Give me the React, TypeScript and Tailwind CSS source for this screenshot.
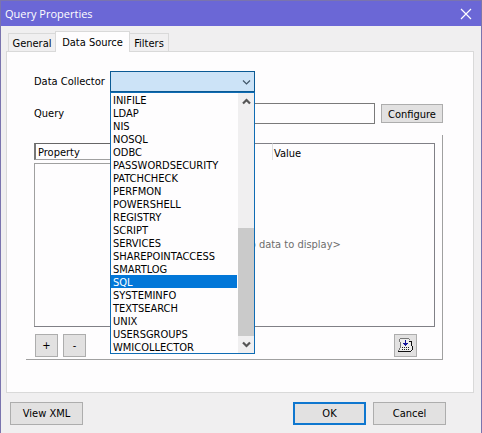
import React, { useState } from "react";

const collectors = [
  "INIFILE",
  "LDAP",
  "NIS",
  "NOSQL",
  "ODBC",
  "PASSWORDSECURITY",
  "PATCHCHECK",
  "PERFMON",
  "POWERSHELL",
  "REGISTRY",
  "SCRIPT",
  "SERVICES",
  "SHAREPOINTACCESS",
  "SMARTLOG",
  "SQL",
  "SYSTEMINFO",
  "TEXTSEARCH",
  "UNIX",
  "USERSGROUPS",
  "WMICOLLECTOR",
];

function Chevron({ up = false, thin = false }: { up?: boolean; thin?: boolean }) {
  return (
    <svg
      width="9"
      height="7"
      viewBox="0 0 9 7"
      fill="none"
      stroke={thin ? "#3f5568" : "#555555"}
      strokeWidth={thin ? 1.2 : 2.2}
      aria-hidden="true"
    >
      <path d={up ? "M1 5.5 4.5 2 8 5.5" : "M1 1.5 4.5 5 8 1.5"} />
    </svg>
  );
}

function SheetIcon() {
  return (
    <svg width="15" height="15" viewBox="0 0 15 15" fill="none" shapeRendering="crispEdges" aria-hidden="true">
      <path d="M2 1h9v2h3v4l1 2v3l-2 2H1l1-3V6L1 4z" fill="#ededed" />
      <path d="M2 0h9v1H2zM1 1h1v3H1zM2 4h1v6H2zM1 10h1v2H1zM0 12h1v1H0zM11 1h1v1h-1z" fill="#777777" />
      <path d="M11 3h3v5h-1V4h-2zM14 8h1v4h-1zM13 12h1v1h-1zM0 13h13v1H0z" fill="#111111" />
      <path d="M7 2h1v3h2v1H9v1H8v1H7V7H6V6H5V5h2z" fill="#15159a" />
      <path d="M4 9h1v1H4zM6 9h1v1H6zM8 9h1v1H8zM10 9h1v1h-1zM4 11h1v1H4zM6 11h1v1H6zM8 11h1v1H8zM10 11h1v1h-1z" fill="#222222" />
    </svg>
  );
}

const button = "border border-[#adadad] bg-[#e2e1e1] text-center";

export default function App() {
  const [selected, setSelected] = useState("SQL");

  return (
    <main className="border border-[#7a74ae] bg-[#f0eff0] font-['DejaVu_Sans_Condensed','DejaVu_Sans',sans-serif] text-[11px] leading-[13px] text-black">
      <header className="flex h-[25px] items-center justify-between bg-[#6b67d6] pr-[9px] pl-1 text-white">
        <h1 className="font-['Open_Sans',sans-serif] text-[11px] leading-4">Query Properties</h1>
        <button type="button" aria-label="Close">
          <svg width="12" height="12" viewBox="0 0 12 12" stroke="white" strokeWidth="1.200" aria-hidden="true">
            <path d="M1 1l10 10M11 1 1 11" />
          </svg>
        </button>
      </header>

      <div className="pt-[5px] pr-[7px] pl-[5px]">
        <div role="tablist" className="-mb-px flex items-end pl-[2px]">
          <button type="button" role="tab" aria-selected="false" className="h-[19px] w-[47px] border border-r-0 border-[#d9d9d9] pt-[2px]">
            General
          </button>
          <button type="button" role="tab" aria-selected="true" className="z-10 h-[21px] w-[75px] border border-b-0 border-[#d9d9d9] bg-[#fefdfe]">
            Data Source
          </button>
          <button type="button" role="tab" aria-selected="false" className="h-[19px] w-[39px] border border-l-0 border-[#d9d9d9] pt-[2px]">
            Filters
          </button>
        </div>

        <section className="border border-[#d9d9d9] bg-[#fefdfe] pt-[19px] pr-[30px] pb-8 pl-[19px]">
          <div className="pl-2">
            <div className="flex items-center">
              <label htmlFor="collector" className="w-[76px]">
                Data Collector
              </label>
              <div className="relative w-[145px]">
                <select
                  id="collector"
                  className="block h-[21px] w-full appearance-none border border-[#0a5a94] bg-[#cce3f7] text-transparent"
                  value={selected}
                  onChange={(event) => setSelected(event.target.value)}
                >
                  {collectors.map((name) => (
                    <option key={name}>{name}</option>
                  ))}
                </select>
                <span className="pointer-events-none absolute top-2 right-1">
                  <Chevron thin />
                </span>
                <div className="absolute top-[21px] left-0 z-20 flex w-full border border-[#0f6cb4] bg-[#fefdfe]">
                  <ul role="listbox" aria-label="Data Collector" className="flex-1">
                    {collectors.map((name) => (
                      <li
                        key={name}
                        role="option"
                        aria-selected={name === selected}
                        onClick={() => setSelected(name)}
                        className={
                          name === selected
                            ? "h-[13px] bg-[#0277d8] pt-px pl-[2px] text-white"
                            : "h-[13px] pt-px pl-[2px]"
                        }
                      >
                        {name}
                      </li>
                    ))}
                  </ul>
                  <div className="ml-px flex w-4 flex-col bg-[#f0eff0]">
                    <span className="flex h-[17px] items-center justify-center">
                      <Chevron up />
                    </span>
                    <span className="mt-auto h-[108px] bg-[#cacaca]" />
                    <span className="flex h-[17px] items-center justify-center">
                      <Chevron />
                    </span>
                  </div>
                </div>
              </div>
            </div>

            <div className="mt-[11px] flex items-center">
              <label htmlFor="query" className="w-[76px]">
                Query
              </label>
              <input id="query" type="text" className="h-[21px] min-w-0 flex-1 border border-[#7a7a7a] bg-[#fefdfe] px-1" />
              <button type="button" className={`${button} ml-[6px] h-[19px] w-[62px] pt-px`}>
                Configure
              </button>
            </div>
          </div>

          <div className="mt-[11px] border-r border-b border-[#a0a0a0] pt-2 pr-[7px] pb-[2px] pl-2">
            <div className="border-r border-b border-[#808086]">
              <table className="w-full table-fixed border-separate border-spacing-0 text-left">
                <colgroup>
                  <col className="w-[200px]" />
                  <col className="w-[38px]" />
                  <col />
                </colgroup>
                <thead>
                  <tr className="h-4">
                    <th className="border-t border-b border-l-2 border-t-[#666] border-b-[#a0a0a0] border-l-[#777] pt-[2px] pl-[2px] font-normal">Property</th>
                    <th className="border-t border-[#808086]" />
                    <th className="border-t border-l border-t-[#808086] border-l-[#e0e0e0] pt-[2px] pl-px font-normal">Value</th>
                  </tr>
                </thead>
                <tbody>
                  <tr className="h-[3px]">
                    <td colSpan={3} className="h-[3px] p-0" />
                  </tr>
                  <tr className="h-[163px]">
                    <td className="border-t border-l border-[#a0a0a0]" />
                    <td colSpan={2} className="text-[#6d6d6d]">
                      &lt;No data to display&gt;
                    </td>
                  </tr>
                </tbody>
              </table>
            </div>
            <div className="mt-[7px] flex gap-[5px] pl-px">
              <button type="button" aria-label="Add property" className={`${button} size-[23px]`}>
                +
              </button>
              <button type="button" aria-label="Remove property" className={`${button} size-[23px]`}>
                -
              </button>
              <button type="button" aria-label="Insert" className={`${button} mr-[18px] ml-auto flex size-[23px] items-center justify-center`}>
                <SheetIcon />
              </button>
            </div>
          </div>
        </section>
      </div>

      <footer className="flex pt-[9px] pr-[35px] pb-[9px] pl-[9px]">
        <button type="button" className={`${button} h-[23px] w-[73px]`}>
          View XML
        </button>
        <button type="button" className="ml-auto h-[23px] w-[73px] border-2 border-[#0f77cf] bg-[#e2e1e1]">
          OK
        </button>
        <button type="button" className={`${button} ml-[7px] h-[23px] w-[73px]`}>
          Cancel
        </button>
      </footer>
    </main>
  );
}
